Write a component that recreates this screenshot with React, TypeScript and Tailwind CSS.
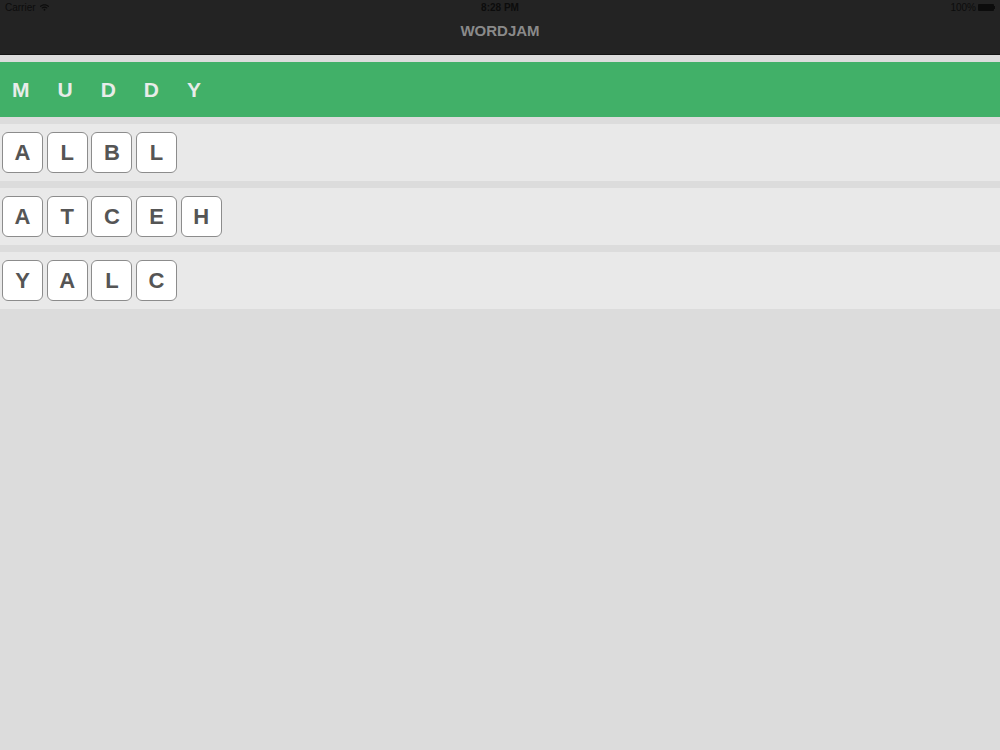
import { FaWifi } from "react-icons/fa";

const rows = [
  ["A", "L", "B", "L"],
  ["A", "T", "C", "E", "H"],
  ["Y", "A", "L", "C"],
];

function Tile({ letter }: { letter: string }) {
  return (
    <div className="w-[41px] h-[41px] rounded-[6px] border border-[#8c8c8c] bg-white flex items-center justify-center text-[22px] font-bold text-[#555555]">
      {letter}
    </div>
  );
}

export default function App() {
  return (
    <div className="min-h-[750px] bg-[#dcdcdc] font-['Liberation_Sans',Arial,sans-serif]">
      {/* Nav bar with status bar */}
      <header className="h-[55px] bg-[#232323] border-b border-[#141414] flex flex-col">
        <div className="h-[15px] px-[5px] flex items-center justify-between text-[10px] text-[#0c0c0c]">
          <div className="flex items-center gap-[4px] w-[120px]">
            <span>Carrier</span>
            <FaWifi className="text-[9px]" />
          </div>
          <span className="font-semibold">8:28 PM</span>
          <div className="flex items-center justify-end gap-[2px] w-[120px]">
            <span>100%</span>
            <div className="flex items-center">
              <div className="w-[16px] h-[7px] rounded-[1px] bg-[#0c0c0c]" />
              <div className="w-[1px] h-[3px] bg-[#0c0c0c]" />
            </div>
          </div>
        </div>
        <div className="flex-1 flex items-center justify-center pb-[7px]">
          <span className="text-[15px] font-bold text-[#8a8a8a]">WORDJAM</span>
        </div>
      </header>

      <main className="pt-[7px] flex flex-col gap-[7px]">
        {/* Target word */}
        <div className="h-[55px] bg-[#41b068] flex items-center pl-[12px]">
          <span className="text-[21px] font-bold text-[#e8ece9] tracking-[28px]">MUDDY</span>
        </div>

        {rows.map((letters, i) => (
          <div key={i} className="h-[57px] bg-[#e9e9e9] flex items-center gap-[3.7px] px-[2px]">
            {letters.map((l, j) => (
              <Tile key={j} letter={l} />
            ))}
          </div>
        ))}
      </main>
    </div>
  );
}
